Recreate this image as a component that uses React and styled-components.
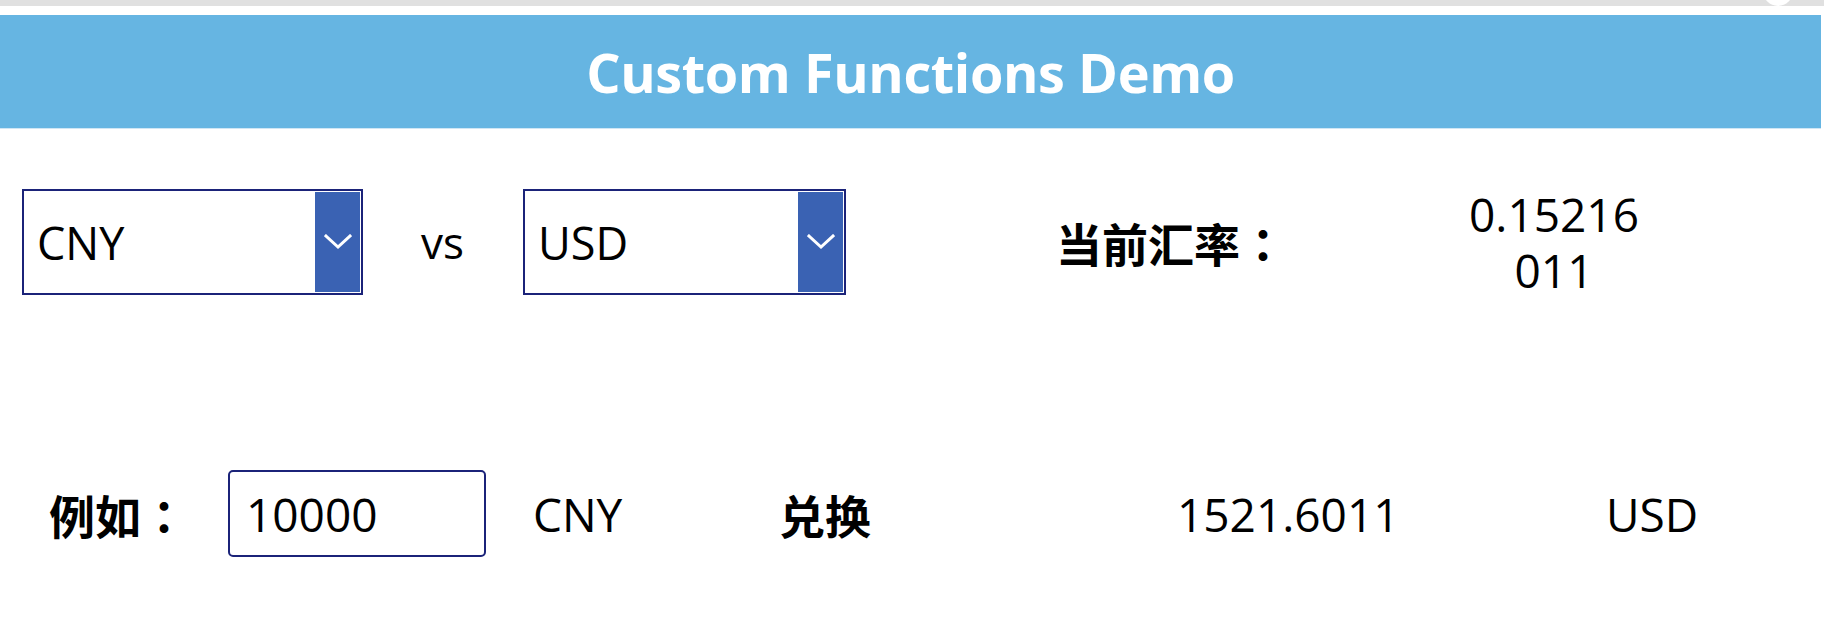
import React from "react";
import styled, { createGlobalStyle } from "styled-components";

const Global = createGlobalStyle`
  html, body { margin: 0; padding: 0; background: #fff; }
  body { font-family: "Open Sans", "Noto Sans CJK SC", sans-serif; color: #000; }
`;

const Page = styled.div`
  width: 1824px;
  height: 631px;
  overflow: hidden;
  background: #fff;
  display: flex;
  flex-direction: column;
`;

const TopStrip = styled.div`
  position: relative;
  height: 6px;
  background: #e0e0e0;
  &::after {
    content: "";
    position: absolute;
    left: 1763px;
    top: -24px;
    width: 30px;
    height: 30px;
    border-radius: 50%;
    background: #fff;
  }
`;

const Header = styled.header`
  margin-top: 9px;
  width: 1821px;
  height: 113px;
  background: #66b5e2;
  border-bottom: 1px solid #cfe6f5;
  display: flex;
  align-items: center;
  justify-content: center;
  color: #fff;
  font-family: "Open Sans", sans-serif;
  font-weight: 700;
  font-size: 54px;
  letter-spacing: -0.4px;
`;

const Row = styled.div`
  display: flex;
  align-items: center;
  margin-top: ${(p) => p.$top}px;
  height: ${(p) => p.$h}px;
`;

const Cell = styled.div`
  flex: none;
  width: ${(p) => p.$w}px;
  display: flex;
  align-items: center;
  font-size: 46px;
  font-weight: ${(p) => p.$weight || 400};
  font-family: "Open Sans", "Noto Sans CJK SC", sans-serif;
  white-space: nowrap;
`;

const Dropdown = styled.div`
  box-sizing: border-box;
  width: ${(p) => p.$w}px;
  height: 106px;
  border: 2px solid #1b2379;
  display: flex;
  align-items: stretch;
  background: #fff;
`;

const DropText = styled.div`
  flex: 1;
  display: flex;
  align-items: center;
  padding-left: 13px;
  font-size: 45px;
  font-weight: 400;
  font-family: "Open Sans", sans-serif;
`;

const DropButton = styled.div`
  width: 45px;
  margin: 1px 1px 1px 0;
  background: #3a62b3;
  display: flex;
  align-items: center;
  justify-content: center;
`;

const Vs = styled(Cell)`
  font-size: 44px;
`;

const CjkLabel = styled(Cell)`
  font-family: "Noto Sans CJK SC", sans-serif;
  font-weight: 700;
  font-size: 46px;
`;

const Colon = styled.span`
  font-family: "Noto Sans CJK TC", sans-serif;
`;

const RateValue = styled.div`
  flex: none;
  width: 184px;
  margin-left: ${(p) => p.$ml}px;
  text-align: center;
  font-size: 46px;
  font-weight: 500;
  line-height: 56px;
  word-break: break-all;
  white-space: normal;
`;

const InputBox = styled.div`
  box-sizing: border-box;
  width: 258px;
  height: 87px;
  border: 2px solid #1b2379;
  border-radius: 5px;
  display: flex;
  align-items: center;
  padding-left: 16px;
  font-size: 46px;
  font-weight: 400;
  font-family: "Open Sans", sans-serif;
`;

const Chevron = () => (
  <svg width="28" height="16" viewBox="0 0 28 16" fill="none">
    <path d="M2 2 L14 13 L26 2" stroke="#fff" strokeWidth="3" strokeLinecap="square" />
  </svg>
);

export default function App() {
  return (
    <Page>
      <Global />
      <TopStrip />
      <Header>Custom Functions Demo</Header>

      <Row $top={60} $h={106}>
        <Cell $w={22} />
        <Cell $w={399}>
          <Dropdown $w={341}>
            <DropText>CNY</DropText>
            <DropButton><Chevron /></DropButton>
          </Dropdown>
        </Cell>
        <Vs $w={102}>vs</Vs>
        <Cell $w={533}>
          <Dropdown $w={323}>
            <DropText>USD</DropText>
            <DropButton><Chevron /></DropButton>
          </Dropdown>
        </Cell>
        <CjkLabel $w={406}>当前汇率<Colon>：</Colon></CjkLabel>
        <RateValue $ml={0}>0.15216011</RateValue>
      </Row>

      <Row $top={175} $h={87}>
        <Cell $w={49} />
        <CjkLabel $w={179}>例如<Colon>：</Colon></CjkLabel>
        <Cell $w={305}>
          <InputBox>10000</InputBox>
        </Cell>
        <Cell $w={246} $weight={500}>CNY</Cell>
        <CjkLabel $w={398}>兑换</CjkLabel>
        <Cell $w={429} $weight={500}>1521.6011</Cell>
        <Cell $w={200} $weight={500}>USD</Cell>
      </Row>
    </Page>
  );
}
